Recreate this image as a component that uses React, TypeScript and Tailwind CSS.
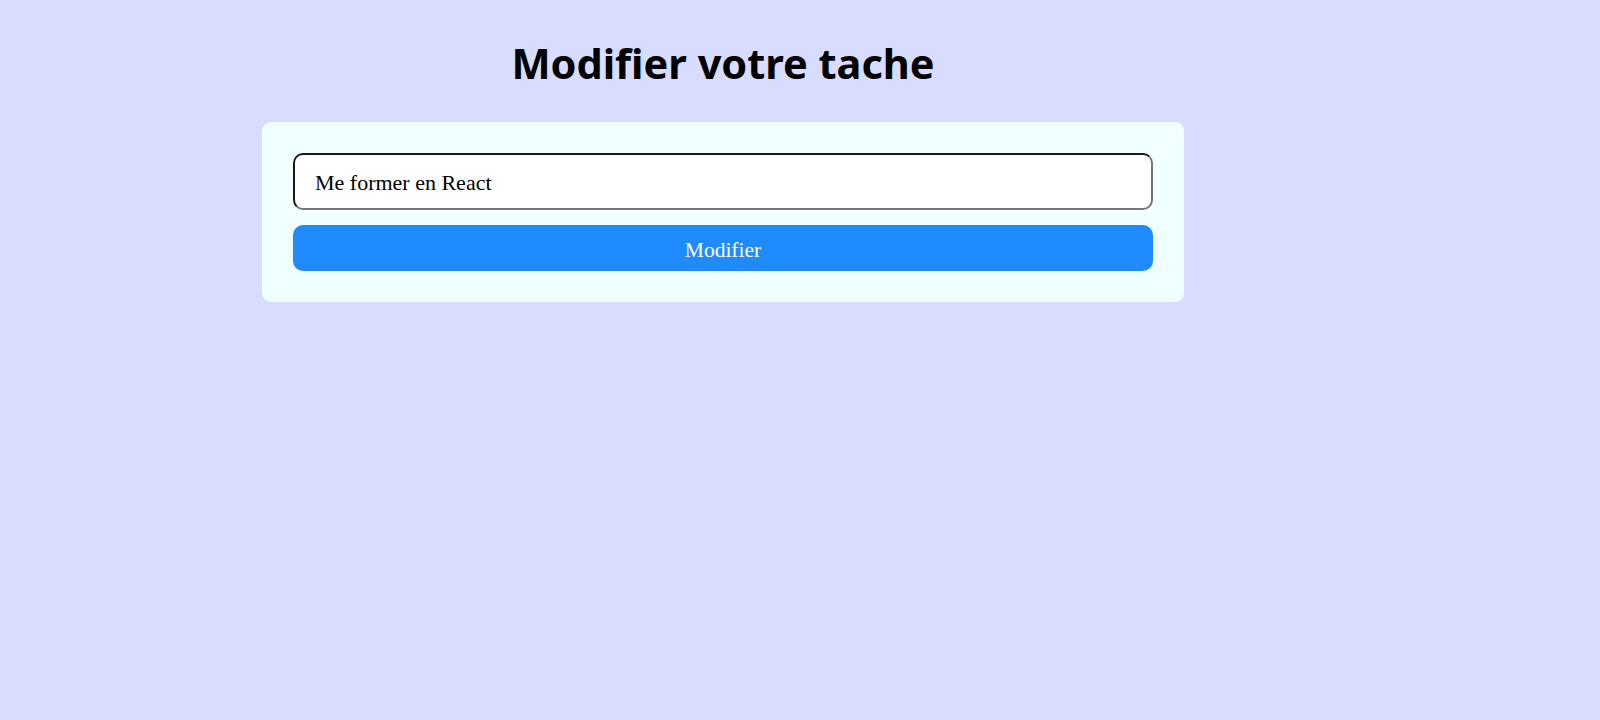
import { useState } from "react";

export default function App() {
  const [task, setTask] = useState("Me former en React");

  return (
    <div className="min-h-screen w-full bg-[#d8dcff] pt-[36px]">
      <div className="ml-[262px] w-[922px]">
        <h1 className="text-center font-['Noto_Sans',sans-serif] text-[41.5px] font-bold leading-[54px] text-black">
          Modifier votre tache
        </h1>

        <form
          className="mt-[32px] flex flex-col gap-[15px] rounded-[9px] bg-[#f0ffff] p-[31px]"
          onSubmit={(e) => e.preventDefault()}
        >
          <input
            type="text"
            value={task}
            onChange={(e) => setTask(e.target.value)}
            className="h-[57px] w-full rounded-[10px] border-2 border-t-[#1a1a1a] border-l-[#1a1a1a] border-b-[#777] border-r-[#777] bg-white px-[20px] pt-[3px] font-['Liberation_Serif',serif] text-[22px] text-black outline-none"
          />
          <button
            type="submit"
            className="h-[46px] w-full rounded-[10px] bg-[#1f8bff] pt-[4px] font-['Liberation_Serif',serif] text-[21.5px] text-white"
          >
            Modifier
          </button>
        </form>
      </div>
    </div>
  );
}
